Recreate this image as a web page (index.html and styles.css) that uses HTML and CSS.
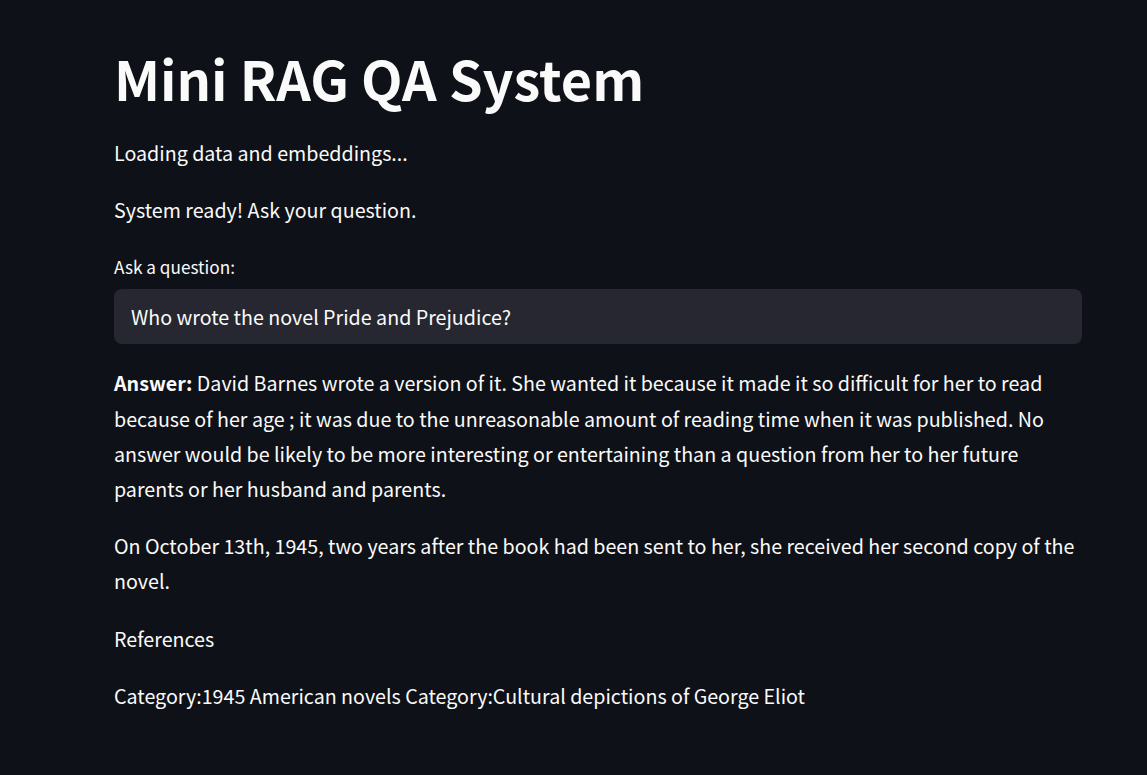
FILE: index.html
```html
<!DOCTYPE html>
<html>
<head>
<meta charset="utf-8">
<link rel="stylesheet" href="styles.css">
</head>
<body>
<main class="main">
  <h1 class="title">Mini RAG QA System</h1>
  <p class="para">Loading data and embeddings...</p>
  <p class="para">System ready! Ask your question.</p>
  <div class="field">
    <label class="label" for="q">Ask a question:</label>
    <div class="input-box"><input id="q" class="input" type="text" value="Who wrote the novel Pride and Prejudice?"></div>
  </div>
  <p class="para"><strong>Answer:</strong> David Barnes wrote a version of it. She wanted it because it made it so difficult for her to read because of her age ; it was due to the unreasonable amount of reading time when it was published. No answer would be likely to be more interesting or entertaining than a question from her to her future parents or her husband and parents.</p>
  <p class="para">On October 13th, 1945, two years after the book had been sent to her, she received her second copy of the novel.</p>
  <p class="para">References</p>
  <p class="para">Category:1945 American novels Category:Cultural depictions of George Eliot</p>
</main>
</body>
</html>
```
FILE: styles.css
```css
html, body {
  margin: 0;
  padding: 0;
  background: #0e1117;
}
body {
  color: #fafafa;
  font-family: "Noto Sans CJK JP", "Noto Sans", sans-serif;
  width: 1147px;
  height: 775px;
  overflow: hidden;
}
.main {
  margin-left: 114px;
  width: 968px;
  padding-top: 42px;
  display: flex;
  flex-direction: column;
}
.title {
  margin: 0 0 21px 0;
  font-size: 54px;
  line-height: 72px;
  font-weight: 700;
}
.para {
  margin: 0 0 22px 0;
  font-size: 19.66px;
  line-height: 35.2px;
}
.para strong {
  font-weight: 700;
}
.field {
  display: flex;
  flex-direction: column;
  gap: 10px;
  margin-top: 6px;
  margin-bottom: 21px;
}
.label {
  font-size: 17.2px;
  line-height: 24px;
}
.input-box {
  height: 55px;
  background: #262730;
  border-radius: 8px;
  display: flex;
  align-items: center;
  padding: 0 17px;
}
.input {
  width: 100%;
  background: transparent;
  border: none;
  outline: none;
  color: #fafafa;
  font-family: inherit;
  font-size: 19.66px;
  padding: 0;
}
```
